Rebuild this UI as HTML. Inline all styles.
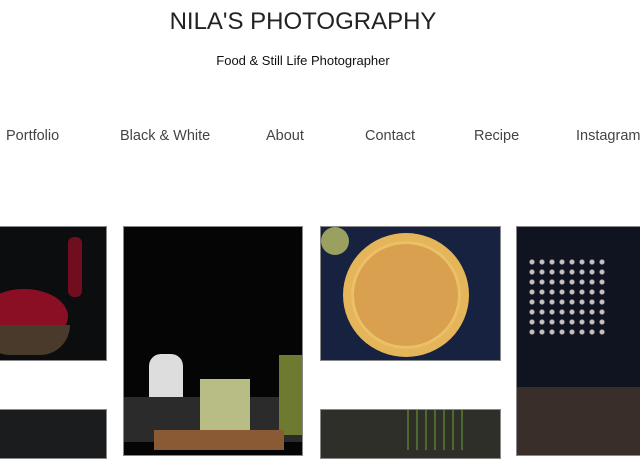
<!DOCTYPE html>
<html><head><style>
body{margin:0;width:640px;height:446px;overflow:hidden;background:#fff;font-family:"Liberation Sans",sans-serif;position:relative;color:#111}
.t{position:absolute;left:0;width:606px;text-align:center}
.n{position:absolute;top:128px;font-size:14.5px;color:#444;white-space:nowrap}
.i{position:absolute;border:1px solid #888;box-sizing:border-box;overflow:hidden}
</style></head><body>
<div class="t" style="top:8px;font-size:24px;color:#222">NILA'S PHOTOGRAPHY</div>
<div class="t" style="top:53px;font-size:13px">Food &amp; Still Life Photographer</div>
<div class="n" style="left:6px">Portfolio</div>
<div class="n" style="left:120px">Black &amp; White</div>
<div class="n" style="left:266px">About</div>
<div class="n" style="left:365px">Contact</div>
<div class="n" style="left:474px">Recipe</div>
<div class="n" style="left:576px">Instagram</div>

<div class="i" style="left:-1px;top:226px;width:108px;height:135px;background:#0b0d0f">
<div style="position:absolute;left:-20px;top:62px;width:88px;height:55px;border-radius:50%;background:#8a0f24"></div>
<div style="position:absolute;left:-20px;top:98px;width:90px;height:30px;border-radius:0 0 40px 40px;background:#4a3a2c"></div>
<div style="position:absolute;left:68px;top:10px;width:14px;height:60px;background:#700e20;border-radius:6px"></div>
</div>
<div class="i" style="left:123px;top:226px;width:180px;height:230px;background:#050505">
<div style="position:absolute;left:25px;top:127px;width:34px;height:52px;border-radius:12px 12px 6px 6px;background:#ddd"></div>
<div style="position:absolute;left:0;top:170px;width:180px;height:45px;background:#2b2b2b"></div>
<div style="position:absolute;left:76px;top:152px;width:50px;height:60px;background:#b8bd85"></div>
<div style="position:absolute;left:155px;top:128px;width:25px;height:80px;background:#6e7a30"></div>
<div style="position:absolute;left:30px;top:203px;width:130px;height:20px;background:#8a5a34"></div>
</div>
<div class="i" style="left:320px;top:226px;width:181px;height:135px;background:#16223f">
<div style="position:absolute;left:22px;top:6px;width:126px;height:124px;border-radius:50%;background:#e5b55a"></div>
<div style="position:absolute;left:30px;top:14px;width:110px;height:108px;border-radius:50%;background:#d9a050;box-shadow:inset 0 0 0 3px #ecc067"></div>
<div style="position:absolute;left:0;top:0;width:28px;height:28px;border-radius:50%;background:#9aa060"></div>
</div>
<div class="i" style="left:516px;top:226px;width:130px;height:230px;background:#0f1420">
<div style="position:absolute;left:0;top:160px;width:124px;height:70px;background:#3a2e2a"></div>
<div style="position:absolute;left:10px;top:30px;width:80px;height:80px;background:radial-gradient(#c8c0c0 2px,transparent 3px) 0 0/10px 10px"></div>
</div>
<div class="i" style="left:-1px;top:409px;width:108px;height:50px;background:#1a1c1e"></div>
<div class="i" style="left:320px;top:409px;width:181px;height:50px;background:#2f2f2a">
<div style="position:absolute;left:86px;top:0;width:56px;height:40px;background:repeating-linear-gradient(90deg,#4d6a2e 0 2px,transparent 2px 9px)"></div>
</div>
</body></html>
